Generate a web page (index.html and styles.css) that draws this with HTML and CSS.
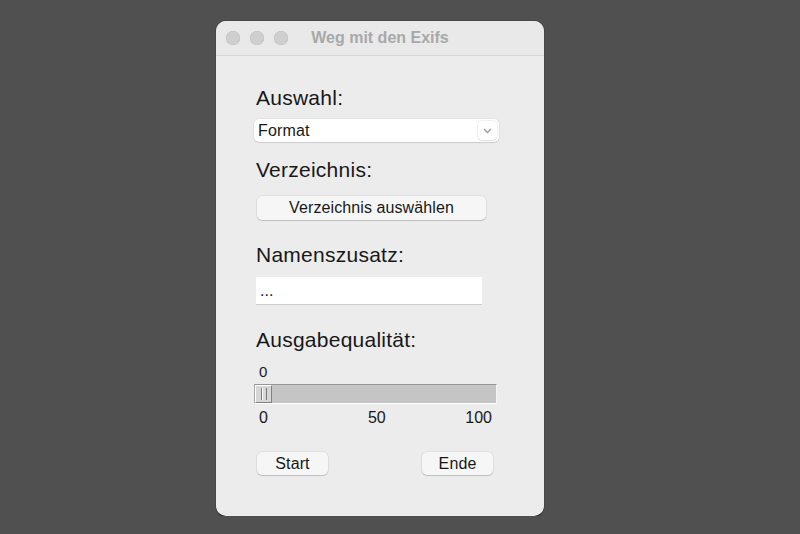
FILE: index.html
```html
<!DOCTYPE html>
<html lang="de">
<head>
	<meta charset="UTF-8">
	<title>Weg mit den Exifs</title>
	<link rel="stylesheet" href="styles.css">
</head>
<body>
	<div class="window">
		<div class="titlebar">
			<div class="lights">
				<span class="light"></span>
				<span class="light"></span>
				<span class="light"></span>
			</div>
			<div class="title">Weg mit den Exifs</div>
		</div>
		<div class="content">
			<div class="label first">Auswahl:</div>
			<div class="select">
				<span class="select-text">Format</span>
				<span class="select-arrow">
					<svg width="9" height="6" viewBox="0 0 9 6"><polyline points="1,1 4.5,4.5 8,1" fill="none" stroke="#9a9a9a" stroke-width="1.3"/></svg>
				</span>
			</div>

			<div class="label verz">Verzeichnis:</div>
			<div class="button wide">Verzeichnis auswählen</div>

			<div class="label name">Namenszusatz:</div>
			<div class="entry">...</div>

			<div class="label qual">Ausgabequalität:</div>
			<div class="value">0</div>
			<div class="track">
				<span class="thumb"><span class="grip"></span></span>
			</div>
			<div class="ticks">
				<span>0</span>
				<span class="mid">50</span>
				<span class="end">100</span>
			</div>

			<div class="buttonrow">
				<div class="button small">Start</div>
				<div class="button small">Ende</div>
			</div>
		</div>
	</div>
</body>
</html>
```

FILE: styles.css
```css
body {
	margin: 0;
	padding: 21px 0 0 216px;
	background-color: rgb(80, 80, 80);
	font-family: "Liberation Sans", Arial, sans-serif;
	color: rgb(24, 24, 24);
}

.window {
	width: 328px;
	height: 495px;
	background-color: rgb(236, 236, 236);
	border-radius: 10px;
	box-shadow: 0 1px 0 rgb(28, 28, 28), 0 0 0 1px rgb(72, 72, 72);
	overflow: hidden;
}

.titlebar {
	display: grid;
	grid-template-columns: 1fr auto 1fr;
	align-items: center;
	height: 34px;
	border-bottom: 1px solid rgb(214, 214, 214);
	background-color: rgb(233, 233, 233);
}

.lights {
	display: flex;
	gap: 10px;
	padding-left: 10px;
}

.light {
	width: 14px;
	height: 14px;
	border-radius: 50%;
	background-color: rgb(207, 207, 207);
	box-shadow: inset 0 0 0 0.5px rgb(190, 190, 190);
}

.title {
	font-size: 16px;
	font-weight: bold;
	color: rgb(168, 168, 168);
}

.content {
	display: flex;
	flex-direction: column;
	align-items: flex-start;
	padding: 30px 40px 0 40px;
}

.label {
	font-size: 21px;
	line-height: 24px;
	letter-spacing: 0.25px;
}

.verz {
	margin-top: 16px;
}

.name {
	margin-top: 23px;
}

.qual {
	margin-top: 24px;
}

.select {
	display: flex;
	align-items: center;
	justify-content: space-between;
	margin: 9px 0 0 -2px;
	width: 245px;
	height: 23px;
	background-color: rgb(255, 255, 255);
	border-radius: 5px;
	box-shadow: 0 0 0 0.5px rgba(0, 0, 0, 0.08), 0 1px 1px rgba(0, 0, 0, 0.1);
}

.select-text {
	padding-left: 4px;
	font-size: 16px;
	letter-spacing: 0.15px;
}

.select-arrow {
	display: flex;
	align-items: center;
	justify-content: center;
	width: 19px;
	height: 19px;
	margin-right: 2px;
	border-radius: 4px;
	box-shadow: 0 0 0 0.5px rgba(0, 0, 0, 0.12), 0 1px 1px rgba(0, 0, 0, 0.08);
}

.button {
	display: flex;
	align-items: center;
	justify-content: center;
	background-color: rgb(246, 246, 246);
	border-radius: 5px;
	box-shadow: 0 0 0 0.5px rgba(0, 0, 0, 0.1), 0 1px 1px rgba(0, 0, 0, 0.15);
	font-size: 16px;
	letter-spacing: 0.1px;
}

.wide {
	margin: 14px 0 0 1px;
	width: 229px;
	height: 24px;
}

.entry {
	margin-top: 10px;
	width: 222px;
	height: 27px;
	padding-left: 4px;
	line-height: 27px;
	font-size: 16px;
	background-color: rgb(255, 255, 255);
	box-shadow: 0 1px 0 rgb(205, 205, 205);
}

.value {
	margin: 11px 0 0 3px;
	font-size: 15px;
	line-height: 17px;
}

.track {
	display: flex;
	margin: 4px 0 0 -2px;
	width: 241px;
	height: 18px;
	background-color: rgb(197, 197, 197);
	border-top: 1px solid rgb(150, 150, 150);
	border-left: 1px solid rgb(170, 170, 170);
	border-bottom: 1px solid rgb(255, 255, 255);
	border-right: 1px solid rgb(245, 245, 245);
}

.thumb {
	display: flex;
	justify-content: center;
	width: 15px;
	height: 16px;
	background-color: rgb(214, 214, 214);
	border-top: 1px solid rgb(255, 255, 255);
	border-left: 1px solid rgb(255, 255, 255);
	border-right: 1px solid rgb(130, 130, 130);
	border-bottom: 1px solid rgb(130, 130, 130);
}

.grip {
	width: 4px;
	margin-top: 2px;
	height: 12px;
	border-left: 1px solid rgb(120, 120, 120);
	border-right: 1px solid rgb(120, 120, 120);
	box-shadow: inset 1px 0 rgb(255, 255, 255);
}

.ticks {
	display: flex;
	margin: 5px 0 0 -2px;
	width: 233px;
	padding: 0 5px;
	font-size: 16px;
	line-height: 18px;
}

.mid {
	margin-left: 100px;
}

.end {
	margin-left: auto;
}

.buttonrow {
	display: flex;
	justify-content: space-between;
	margin: 25px 0 0 1px;
	width: 236px;
}

.small {
	width: 71px;
	height: 23px;
}
```
